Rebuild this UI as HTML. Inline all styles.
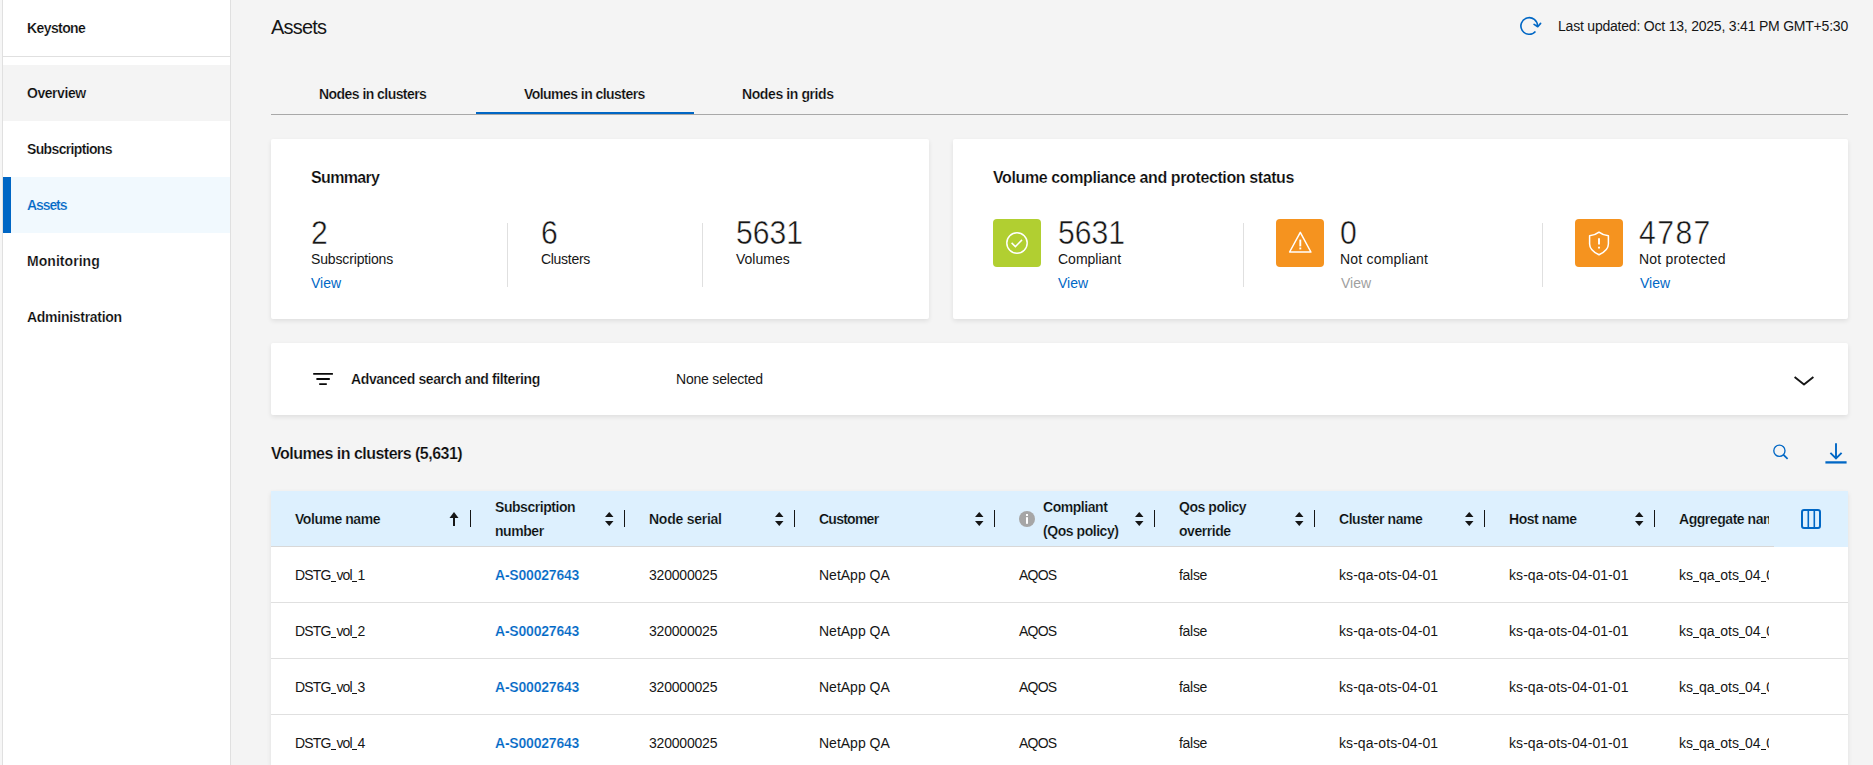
<!DOCTYPE html>
<html><head><meta charset="utf-8">
<style>
*{box-sizing:border-box;margin:0;padding:0}
html,body{width:1873px;height:765px;overflow:hidden;background:#f4f4f4;font-family:"Liberation Sans",sans-serif;color:#161616}
.a{position:absolute;white-space:nowrap;line-height:1}
.s14{font-size:14px}
.b{font-weight:700;color:#0a0a0a}
.sb{font-weight:700;letter-spacing:-0.45px;color:#0a0a0a}

#side{position:absolute;left:2px;top:0;width:229px;height:765px;background:#fff;border-left:1px solid #e0e0e0;border-right:1px solid #e0e0e0}
.card{position:absolute;background:#fff;border-radius:2px;box-shadow:0 2px 5px rgba(0,0,0,0.09)}
.sep{position:absolute;width:1px;background:#e0e0e0}
.ibox{position:absolute;width:48px;height:48px;border-radius:4px}
.num{font-size:33.5px;letter-spacing:0;-webkit-text-stroke:0.5px #fff;transform:scaleX(0.9);transform-origin:0 0}
.hs{position:absolute;width:1px;height:17px;top:510px;background:#161616}
.us{display:inline-block;width:5.5px;height:1.3px;background:currentColor;vertical-align:-2px;margin:0 0.2px}
.tw{-webkit-text-stroke:0.2px #fff}
.tg{-webkit-text-stroke:0.2px #f4f4f4}
.th{-webkit-text-stroke:0.2px #ddf0fe}
.ta{-webkit-text-stroke:0.2px #f1f9fe}
.blue{color:#0067c5}
.rowb{position:absolute;left:271px;width:1577px;height:1px;background:#e0e0e0}
</style></head><body>
<!-- sidebar -->
<div style="position:absolute;left:0;top:0;width:2px;height:765px;background:#f6f6f6"></div>
<div id="side"></div>
<div style="position:absolute;left:3px;top:56px;width:227px;height:1px;background:#e0e0e0"></div>
<div style="position:absolute;left:3px;top:65px;width:227px;height:56px;background:#f4f4f4"></div>
<div style="position:absolute;left:3px;top:177px;width:227px;height:56px;background:#f1f9fe"></div>
<div style="position:absolute;left:3px;top:177px;width:8px;height:56px;background:#0066c4"></div>
<div class="a s14 b tw" style="left:27px;top:21px;letter-spacing:-0.6px">Keystone</div>
<div class="a s14 b tg" style="left:27px;top:86px;letter-spacing:-0.45px">Overview</div>
<div class="a s14 b tw" style="left:27px;top:142px;letter-spacing:-0.65px">Subscriptions</div>
<div class="a s14 b blue ta" style="left:27px;top:198px;letter-spacing:-1.1px">Assets</div>
<div class="a s14 b tw" style="left:27px;top:254px;letter-spacing:0.05px">Monitoring</div>
<div class="a s14 b tw" style="left:27px;top:310px;letter-spacing:-0.28px">Administration</div>

<!-- header -->
<div class="a" style="left:271px;top:17px;font-size:20px;letter-spacing:-0.8px">Assets</div>
<svg style="position:absolute;left:1515px;top:14px" width="30" height="24" viewBox="0 0 30 24">
  <path d="M20.46 17.43 A8.3 8.3 0 1 1 22.5 12.2" fill="none" stroke="#0067c5" stroke-width="1.65"/>
  <path d="M19.1 10.35 L22.75 12.7 L25.6 9.4" fill="none" stroke="#0067c5" stroke-width="1.65" stroke-linecap="round" stroke-linejoin="round"/>
</svg>
<div class="a s14" style="left:1558px;top:19px;letter-spacing:-0.21px">Last updated: Oct 13, 2025, 3:41 PM GMT+5:30</div>

<!-- tabs -->
<div style="position:absolute;left:271px;top:114px;width:1577px;height:1px;background:#a8a8a8"></div>
<div style="position:absolute;left:476px;top:112px;width:218px;height:2px;background:#0066c4"></div>
<div class="a s14 sb tg" style="left:319px;top:87px;letter-spacing:-0.55px">Nodes in clusters</div>
<div class="a s14 sb tg" style="left:524px;top:87px;letter-spacing:-0.55px">Volumes in clusters</div>
<div class="a s14 sb tg" style="left:742px;top:87px;letter-spacing:-0.4px">Nodes in grids</div>

<!-- summary card -->
<div class="card" style="left:271px;top:139px;width:658px;height:180px"></div>
<div class="a b tw" style="left:311px;top:170px;font-size:16px;letter-spacing:-0.65px">Summary</div>
<div class="a num" style="left:311px;top:215.5px">2</div>
<div class="a s14" style="left:311px;top:252px;letter-spacing:-0.15px">Subscriptions</div>
<div class="a s14 blue" style="left:311px;top:276px">View</div>
<div class="sep" style="left:507px;top:223px;height:64px"></div>
<div class="a num" style="left:541px;top:215.5px">6</div>
<div class="a s14" style="left:541px;top:252px;letter-spacing:-0.3px">Clusters</div>
<div class="sep" style="left:702px;top:223px;height:64px"></div>
<div class="a num" style="left:736px;top:215.5px">5631</div>
<div class="a s14" style="left:736px;top:252px">Volumes</div>

<!-- compliance card -->
<div class="card" style="left:953px;top:139px;width:895px;height:180px"></div>
<div class="a b tw" style="left:993px;top:170px;font-size:16px;letter-spacing:-0.39px">Volume compliance and protection status</div>
<div class="ibox" style="left:993px;top:219px;background:#b1cf31"></div>
<svg style="position:absolute;left:993px;top:219px" width="48" height="48" viewBox="0 0 48 48">
  <circle cx="24" cy="24" r="10.2" fill="none" stroke="#fff" stroke-width="1.5"/>
  <path d="M18.6 23.9 L22.4 27.6 L29 20.9" fill="none" stroke="#fff" stroke-width="1.5"/>
</svg>
<div class="a num" style="left:1058px;top:215.5px">5631</div>
<div class="a s14" style="left:1058px;top:252px">Compliant</div>
<div class="a s14 blue" style="left:1058px;top:276px">View</div>
<div class="sep" style="left:1243px;top:223px;height:64px"></div>
<div class="ibox" style="left:1276px;top:219px;background:#f5931f"></div>
<svg style="position:absolute;left:1276px;top:219px" width="48" height="48" viewBox="0 0 48 48">
  <path d="M24.3 13.4 L34.9 33 L13.6 33 Z" fill="none" stroke="#fff" stroke-width="1.5" stroke-linejoin="round"/>
  <path d="M24.3 20.6 V27.4" stroke="#fff" stroke-width="1.9"/>
  <rect x="23.35" y="28.5" width="1.9" height="1.9" fill="#fff"/>
</svg>
<div class="a num" style="left:1340px;top:215.5px">0</div>
<div class="a s14" style="left:1340px;top:252px;letter-spacing:0.2px">Not compliant</div>
<div class="a s14" style="left:1341px;top:276px;color:#a0a0a0">View</div>
<div class="sep" style="left:1542px;top:223px;height:64px"></div>
<div class="ibox" style="left:1575px;top:219px;background:#f5931f"></div>
<svg style="position:absolute;left:1575px;top:219px" width="48" height="48" viewBox="0 0 48 48">
  <path d="M24 13.2 C21 15.6 18 16.5 14.6 16.8 V25 C14.6 29.5 18 33 24 35.8 C30 33 33.4 29.5 33.4 25 V16.8 C30 16.5 27 15.6 24 13.2 Z" fill="none" stroke="#fff" stroke-width="1.5" stroke-linejoin="round"/>
  <path d="M24 19.2 V25.6" stroke="#fff" stroke-width="1.9"/>
  <rect x="23.05" y="27.7" width="1.9" height="1.8" fill="#fff"/>
</svg>
<div class="a num" style="left:1639px;top:215.5px;letter-spacing:1.6px">4787</div>
<div class="a s14" style="left:1639px;top:252px;letter-spacing:0.2px">Not protected</div>
<div class="a s14 blue" style="left:1640px;top:276px">View</div>

<!-- filter card -->
<div class="card" style="left:271px;top:343px;width:1577px;height:72px"></div>
<svg style="position:absolute;left:311px;top:370px" width="26" height="18" viewBox="0 0 26 18">
  <path d="M2.2 3.9 H21.9 M5.4 9 H18.8 M8.2 14.1 H15.8" stroke="#0a0a0a" stroke-width="1.8"/>
</svg>
<div class="a s14 b tw" style="left:351px;top:372px;letter-spacing:-0.38px">Advanced search and filtering</div>
<div class="a s14" style="left:676px;top:372px;letter-spacing:-0.2px">None selected</div>
<svg style="position:absolute;left:1790px;top:370px" width="28" height="20" viewBox="0 0 28 20">
  <path d="M4.6 7 L14 14.6 L23.4 7" fill="none" stroke="#161616" stroke-width="1.9" stroke-linejoin="round"/>
</svg>

<!-- table title + icons -->
<div class="a b tg" style="left:271px;top:446px;font-size:16px;letter-spacing:-0.52px">Volumes in clusters (5,631)</div>
<svg style="position:absolute;left:1770px;top:442px" width="20" height="20" viewBox="0 0 20 20">
  <circle cx="9.4" cy="8.7" r="5.6" fill="none" stroke="#0067c5" stroke-width="1.35"/>
  <path d="M13.3 12.6 L17.6 16.9" stroke="#0067c5" stroke-width="1.7"/>
</svg>
<svg style="position:absolute;left:1824px;top:441px" width="24" height="24" viewBox="0 0 24 24">
  <path d="M12 2.2 V17 M6.4 11.8 L12 17.4 L17.6 11.8" fill="none" stroke="#0067c5" stroke-width="1.9"/><path d="M1.4 21.4 H22.6" stroke="#0067c5" stroke-width="2.3"/>
</svg>

<!-- table -->
<div style="position:absolute;left:271px;top:491px;width:1577px;height:274px;background:#fff;box-shadow:0 2px 5px rgba(0,0,0,0.09)"></div>
<div style="position:absolute;left:271px;top:491px;width:1577px;height:56px;background:#ddf0fe"></div>
<div style="position:absolute;left:271px;top:546px;width:1503px;height:1px;background:#d8d8d8"></div>
<div class="rowb" style="top:602px"></div>
<div class="rowb" style="top:658px"></div>
<div class="rowb" style="top:714px"></div>

<div id="hdr">
<div class="a s14 sb th" style="left:295px;top:512px">Volume name</div>
<svg style="position:absolute;left:449px;top:511px" width="10" height="16" viewBox="0 0 10 16">
  <path d="M0.5 7 L5 1 L9.5 7 Z" fill="#161616"/><rect x="4" y="5" width="2" height="10" fill="#161616"/>
</svg>
<div class="hs" style="left:470px"></div>
<div class="a s14 sb th" style="left:495px;top:495px;line-height:24px">Subscription<br>number</div>
<div class="hs" style="left:624px"></div>
<div class="a s14 sb th" style="left:649px;top:512px;letter-spacing:-0.25px">Node serial</div>
<div class="hs" style="left:794px"></div>
<div class="a s14 sb th" style="left:819px;top:512px;letter-spacing:-0.75px">Customer</div>
<div class="hs" style="left:994px"></div>
<svg style="position:absolute;left:1019px;top:511px" width="16" height="16" viewBox="0 0 16 16">
  <circle cx="8" cy="8" r="8" fill="#a6a6a6"/><rect x="7" y="3" width="2" height="2" fill="#fff"/><rect x="7" y="6.2" width="2" height="6.6" fill="#fff"/>
</svg>
<div class="a s14 sb th" style="left:1043px;top:495px;line-height:24px">Compliant<br>(Qos policy)</div>
<div class="hs" style="left:1154px"></div>
<div class="a s14 sb th" style="left:1179px;top:495px;line-height:24px">Qos policy<br>override</div>
<div class="hs" style="left:1314px"></div>
<div class="a s14 sb th" style="left:1339px;top:512px">Cluster name</div>
<div class="hs" style="left:1484px"></div>
<div class="a s14 sb th" style="left:1509px;top:512px">Host name</div>
<div class="hs" style="left:1654px"></div>
<div style="position:absolute;left:1679px;top:505px;width:90px;height:30px;overflow:hidden"><div class="a s14 sb th" style="left:0;top:7px">Aggregate name</div></div>
<svg style="position:absolute;left:1801px;top:509px" width="20" height="20" viewBox="0 0 20 20">
  <rect x="1" y="1" width="18" height="18" rx="2" fill="none" stroke="#0067c5" stroke-width="2"/>
  <path d="M7.3 1 V19 M13.3 1 V19" stroke="#0067c5" stroke-width="1.6"/>
</svg>
</div>
<svg width="0" height="0" style="position:absolute">
  <defs>
    <g id="srt"><path d="M0 5 L4.25 0 L8.5 5 Z M0 9 L4.25 14 L8.5 9 Z" fill="#161616"/></g>
  </defs>
</svg>
<svg style="position:absolute;left:604.7px;top:512px" width="9" height="14"><use href="#srt"/></svg>
<svg style="position:absolute;left:774.7px;top:512px" width="9" height="14"><use href="#srt"/></svg>
<svg style="position:absolute;left:974.7px;top:512px" width="9" height="14"><use href="#srt"/></svg>
<svg style="position:absolute;left:1134.7px;top:512px" width="9" height="14"><use href="#srt"/></svg>
<svg style="position:absolute;left:1294.7px;top:512px" width="9" height="14"><use href="#srt"/></svg>
<svg style="position:absolute;left:1464.7px;top:512px" width="9" height="14"><use href="#srt"/></svg>
<svg style="position:absolute;left:1634.7px;top:512px" width="9" height="14"><use href="#srt"/></svg>

<div id="rows">
<div class="a s14" style="left:295px;top:568px"><span style="letter-spacing:-0.85px">DSTG<span class="us"></span>vol<span class="us"></span></span>1</div>
<div class="a s14 b blue tw" style="left:495px;top:568px;letter-spacing:-0.2px">A-S00027643</div>
<div class="a s14" style="left:649px;top:568px;letter-spacing:-0.2px">320000025</div>
<div class="a s14" style="left:819px;top:568px">NetApp QA</div>
<div class="a s14" style="left:1019px;top:568px;letter-spacing:-0.8px">AQOS</div>
<div class="a s14" style="left:1179px;top:568px;letter-spacing:-0.3px">false</div>
<div class="a s14" style="left:1339px;top:568px;letter-spacing:0.07px">ks-qa-ots-04-01</div>
<div class="a s14" style="left:1509px;top:568px;letter-spacing:0.07px">ks-qa-ots-04-01-01</div>
<div style="position:absolute;left:1679px;top:564px;width:90px;height:22px;overflow:hidden"><div class="a s14" style="left:0;top:4px">ks<span class="us"></span>qa<span class="us"></span>ots<span class="us"></span>04<span class="us"></span>01</div></div>
<div class="a s14" style="left:295px;top:624px"><span style="letter-spacing:-0.85px">DSTG<span class="us"></span>vol<span class="us"></span></span>2</div>
<div class="a s14 b blue tw" style="left:495px;top:624px;letter-spacing:-0.2px">A-S00027643</div>
<div class="a s14" style="left:649px;top:624px;letter-spacing:-0.2px">320000025</div>
<div class="a s14" style="left:819px;top:624px">NetApp QA</div>
<div class="a s14" style="left:1019px;top:624px;letter-spacing:-0.8px">AQOS</div>
<div class="a s14" style="left:1179px;top:624px;letter-spacing:-0.3px">false</div>
<div class="a s14" style="left:1339px;top:624px;letter-spacing:0.07px">ks-qa-ots-04-01</div>
<div class="a s14" style="left:1509px;top:624px;letter-spacing:0.07px">ks-qa-ots-04-01-01</div>
<div style="position:absolute;left:1679px;top:620px;width:90px;height:22px;overflow:hidden"><div class="a s14" style="left:0;top:4px">ks<span class="us"></span>qa<span class="us"></span>ots<span class="us"></span>04<span class="us"></span>01</div></div>
<div class="a s14" style="left:295px;top:680px"><span style="letter-spacing:-0.85px">DSTG<span class="us"></span>vol<span class="us"></span></span>3</div>
<div class="a s14 b blue tw" style="left:495px;top:680px;letter-spacing:-0.2px">A-S00027643</div>
<div class="a s14" style="left:649px;top:680px;letter-spacing:-0.2px">320000025</div>
<div class="a s14" style="left:819px;top:680px">NetApp QA</div>
<div class="a s14" style="left:1019px;top:680px;letter-spacing:-0.8px">AQOS</div>
<div class="a s14" style="left:1179px;top:680px;letter-spacing:-0.3px">false</div>
<div class="a s14" style="left:1339px;top:680px;letter-spacing:0.07px">ks-qa-ots-04-01</div>
<div class="a s14" style="left:1509px;top:680px;letter-spacing:0.07px">ks-qa-ots-04-01-01</div>
<div style="position:absolute;left:1679px;top:676px;width:90px;height:22px;overflow:hidden"><div class="a s14" style="left:0;top:4px">ks<span class="us"></span>qa<span class="us"></span>ots<span class="us"></span>04<span class="us"></span>01</div></div>
<div class="a s14" style="left:295px;top:736px"><span style="letter-spacing:-0.85px">DSTG<span class="us"></span>vol<span class="us"></span></span>4</div>
<div class="a s14 b blue tw" style="left:495px;top:736px;letter-spacing:-0.2px">A-S00027643</div>
<div class="a s14" style="left:649px;top:736px;letter-spacing:-0.2px">320000025</div>
<div class="a s14" style="left:819px;top:736px">NetApp QA</div>
<div class="a s14" style="left:1019px;top:736px;letter-spacing:-0.8px">AQOS</div>
<div class="a s14" style="left:1179px;top:736px;letter-spacing:-0.3px">false</div>
<div class="a s14" style="left:1339px;top:736px;letter-spacing:0.07px">ks-qa-ots-04-01</div>
<div class="a s14" style="left:1509px;top:736px;letter-spacing:0.07px">ks-qa-ots-04-01-01</div>
<div style="position:absolute;left:1679px;top:732px;width:90px;height:22px;overflow:hidden"><div class="a s14" style="left:0;top:4px">ks<span class="us"></span>qa<span class="us"></span>ots<span class="us"></span>04<span class="us"></span>01</div></div>
</div>
</body></html>
